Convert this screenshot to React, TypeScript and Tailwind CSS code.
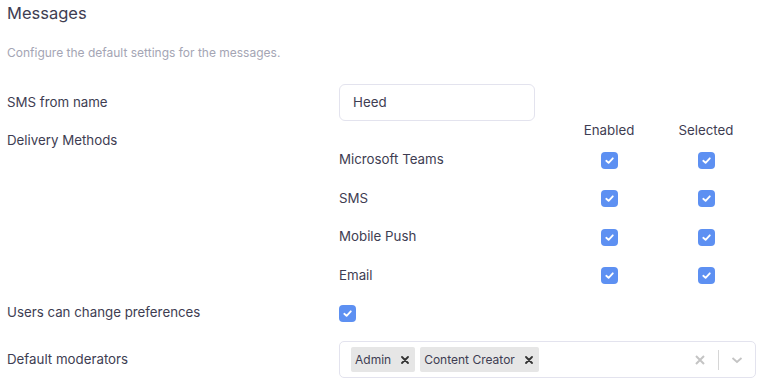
import React from 'react';

function Check() {
  return (
    <span className="inline-flex w-[17px] h-[17px] rounded-[4px] bg-[#5d90f2] items-center justify-center">
      <svg width="11" height="11" viewBox="0 0 12 12" fill="none">
        <path d="M2.5 6.3 L5 8.6 L9.6 3.6" stroke="white" strokeWidth="2" strokeLinecap="round" strokeLinejoin="round" />
      </svg>
    </span>
  );
}

const methods = ['Microsoft Teams', 'SMS', 'Mobile Push', 'Email'];

export default function App() {
  return (
    <div className="w-[765px] h-[386px] bg-white px-[7px] text-[#3e3d52] font-['Inter',sans-serif] text-[13.3px] overflow-hidden">
      <div className="h-[26px] flex items-center text-[16.5px]">Messages</div>
      <div className="mt-[18px] h-[18px] leading-[18px] text-[12px] text-[#a4a5b4]">Configure the default settings for the messages.</div>

      <div className="mt-[22px] grid grid-cols-[332px_1fr]">
        <div className="flex items-center h-[37px]">SMS from name</div>
        <div>
          <div className="w-[196px] h-[37px] border border-[#e3e3ee] rounded-[6px] flex items-center px-[13px]">Heed</div>
        </div>

        <div className="pt-[10px] leading-[18px]">Delivery Methods</div>
        <div className="w-[417px]">
          <div className="grid grid-cols-[222px_96px_98px] h-[20px] items-center">
            <span />
            <span className="text-center">Enabled</span>
            <span className="text-center">Selected</span>
          </div>
          {methods.map((m) => (
            <div key={m} className="grid grid-cols-[222px_96px_98px] h-[38.5px] items-center">
              <span>{m}</span>
              <span className="flex justify-center"><Check /></span>
              <span className="flex justify-center"><Check /></span>
            </div>
          ))}
        </div>

        <div className="flex items-center h-[36px]">Users can change preferences</div>
        <div className="flex items-center h-[36px]"><Check /></div>

        <div className="flex items-center h-[37px] mt-[10px]">Default moderators</div>
        <div className="mt-[10px]">
          <div className="w-[417px] h-[37px] border border-[#e3e3ee] rounded-[5px] flex items-center pl-[11px] pr-[8px]">
            <div className="flex gap-[5px] flex-1">
              {['Admin', 'Content Creator'].map((t) => (
                <span key={t} className="h-[25px] bg-[#e6e6e6] rounded-[2px] flex items-center pl-[4px] pr-[6px] gap-[10px] text-[12px]">
                  {t}
                  <svg width="8" height="8" viewBox="0 0 8 8"><path d="M1 1 L7 7 M7 1 L1 7" stroke="#333" strokeWidth="1.8" strokeLinecap="round" /></svg>
                </span>
              ))}
            </div>
            <svg width="10" height="10" viewBox="0 0 10 10" className="mr-[13px]"><path d="M1 1 L9 9 M9 1 L1 9" stroke="#c4c4c4" strokeWidth="2" /></svg>
            <span className="w-px h-[20px] bg-[#d6d6d6]" />
            <svg width="12" height="8" viewBox="0 0 12 8" className="ml-[12px] mr-[4px]"><path d="M1.5 2 L6 6 L10.5 2" stroke="#c4c4c4" strokeWidth="1.8" fill="none" /></svg>
          </div>
        </div>
      </div>
    </div>
  );
}
